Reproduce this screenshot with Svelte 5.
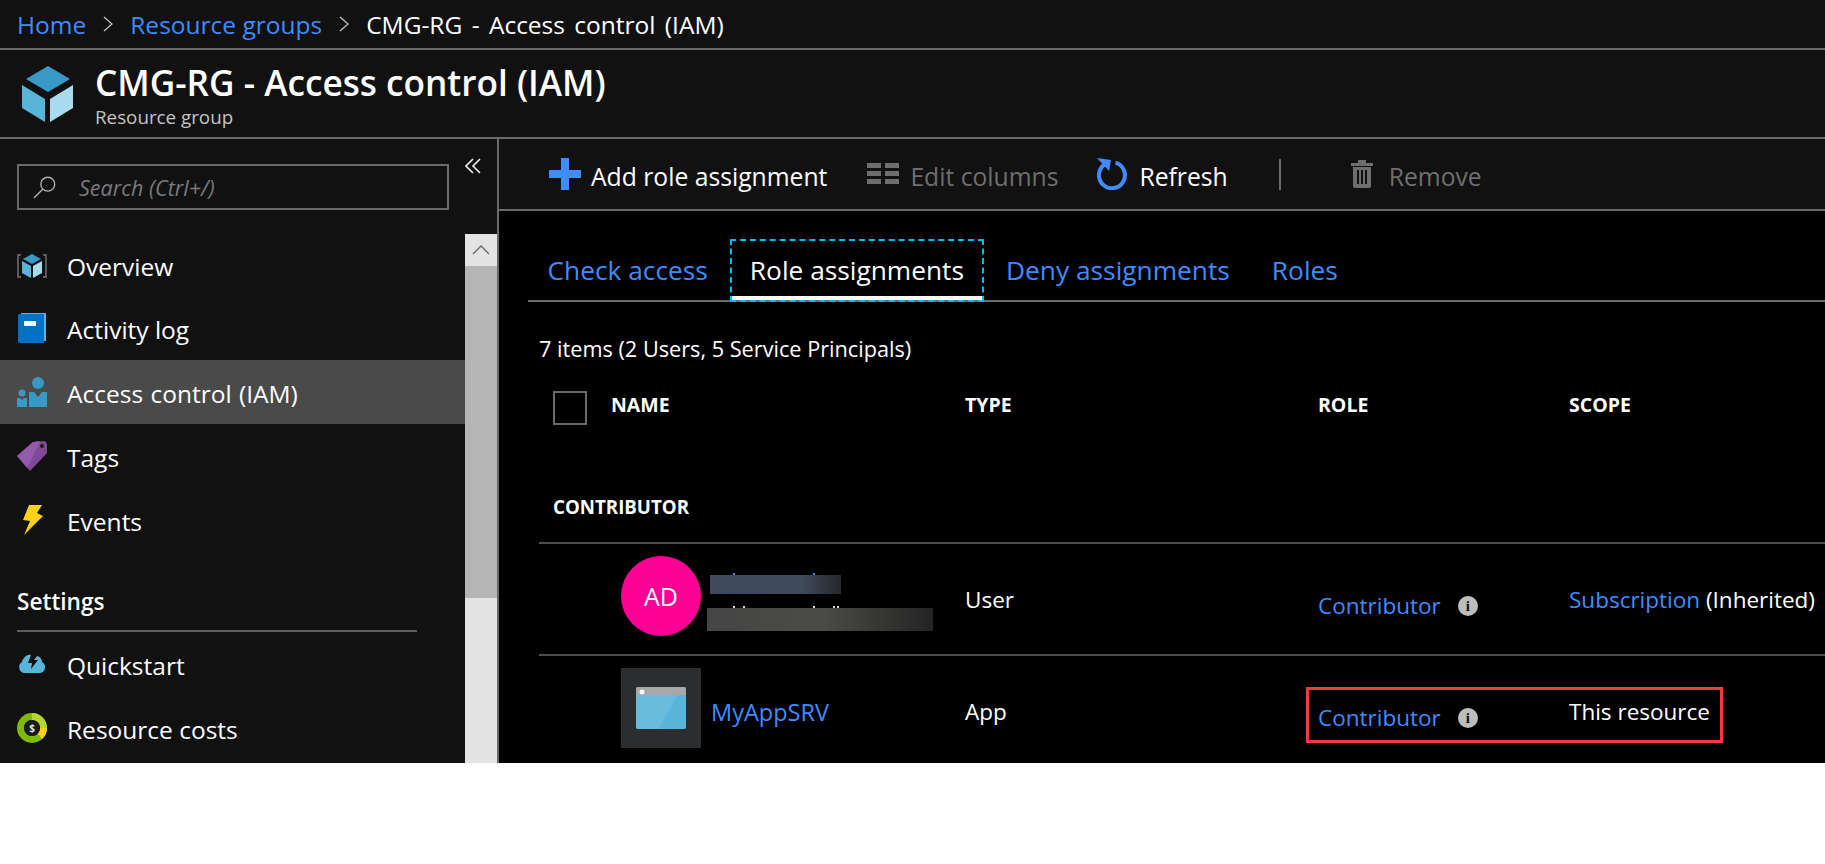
<script>
  const nav = ['Overview', 'Activity log', 'Access control (IAM)', 'Tags', 'Events'];
</script>

<div class="page">
  <nav class="crumbs">
    <a href="#home">Home</a>
    <svg class="chev" viewBox="0 0 10 16"><path d="M1 1l8 7-8 7" /></svg>
    <a href="#rg">Resource groups</a>
    <svg class="chev" viewBox="0 0 10 16"><path d="M1 1l8 7-8 7" /></svg>
    <span class="here">CMG-RG - Access control (IAM)</span>
  </nav>

  <header class="head">
    <svg class="cube" viewBox="0 0 51 56">
      <polygon points="26,0 48,13 26,26 4,13" fill="#3999c6" />
      <polygon points="0,19 23,33 23,56 0,42" fill="#59b4d9" />
      <polygon points="28,33 51,19 51,42 28,56" fill="#a9dbef" />
    </svg>
    <div class="titles">
      <h1>CMG-RG - Access control (IAM)</h1>
      <p>Resource group</p>
    </div>
  </header>

  <div class="body">
    <aside class="side">
      <div class="side-top">
        <div class="search">
          <svg viewBox="0 0 26 26" class="glass"><circle cx="16" cy="10" r="7.5" /><path d="M10.5 15.5L1 25" /></svg>
          <span>Search (Ctrl+/)</span>
        </div>
        <svg class="collapse" viewBox="0 0 16 16"><path d="M8 1L1 8l7 7M15 1L8 8l7 7" /></svg>
      </div>
      <div class="side-main">
        <div class="menu">
          {#each nav as item, i}
            <div class="item" class:sel={i === 2}>
              <span class="ico">
                {#if i === 0}
                  <svg viewBox="0 0 30 24" width="30" height="24">
                    <path d="M4 1H1v22h3M26 1h3v22h-3" fill="none" stroke="#777" stroke-width="1.4" />
                    <polygon points="15,0 24,5 15,10 6,5" fill="#3999c6" />
                    <polygon points="5,7 14,12 14,24 5,19" fill="#59b4d9" />
                    <polygon points="16,12 25,7 25,19 16,24" fill="#a9dbef" />
                  </svg>
                {:else if i === 1}
                  <svg viewBox="0 0 28 30" width="28" height="30">
                    <path d="M3 0h25v28h-2V2H3z" fill="#59b4d9" />
                    <path d="M2 1h24v29H2a2 2 0 0 1-2-2V3a2 2 0 0 1 2-2z" fill="#0072c6" />
                    <rect x="6" y="8" width="12" height="5" rx="1" fill="#fff" />
                  </svg>
                {:else if i === 2}
                  <svg viewBox="0 0 30 30" width="30" height="30">
                    <circle cx="21" cy="6" r="6" fill="#3999c6" />
                    <path d="M12 15h5l4 5 4-5h5v15H12z" fill="#3999c6" />
                    <circle cx="5" cy="16" r="3.5" fill="#3999c6" />
                    <path d="M0 21h3l2 2 2-2h3v9H0z" fill="#3999c6" />
                  </svg>
                {:else if i === 3}
                  <svg viewBox="0 0 30 30" width="30" height="30">
                    <path d="M0 15L16 1l12-1 2 3v9L13 30z" fill="#804998" />
                    <path d="M0 15L16 1l6-1 1 1-13 26z" fill="#9c62b4" opacity=".7" />
                    <circle cx="25" cy="5" r="2" fill="#1a1a1a" />
                  </svg>
                {:else}
                  <svg viewBox="0 0 30 30" width="30" height="30">
                    <polygon points="12,0 25,0 20,8 26,11 7,30 13,16 6,15" fill="#fcd116" />
                  </svg>
                {/if}
              </span>
              <span class="label">{item}</span>
            </div>
          {/each}

          <div class="group">Settings</div>

          <div class="item first">
            <span class="ico">
              <svg viewBox="0 0 30 20" width="30" height="20">
                <path d="M7 19a6 6 0 0 1-2-11c1-4 5-8 9-7l-3 8 4 0-1 6 7-9h-4l3-4c4 1 5 4 5 6a5.500 5.500 0 0 1 3 5c0 3-2 6-5 6z" fill="#59b4d9" />
              </svg>
            </span>
            <span class="label">Quickstart</span>
          </div>
          <div class="item">
            <span class="ico">
              <svg viewBox="0 0 30 30" width="30" height="30">
                <circle cx="15" cy="15" r="11.500" fill="none" stroke="#7fba00" stroke-width="7" />
                <path d="M15 3.500A11.500 11.500 0 0 1 26.500 15" fill="none" stroke="#b8d432" stroke-width="7" />
                <path d="M26.500 15A11.500 11.500 0 0 1 23 23.200" fill="none" stroke="#fcd116" stroke-width="7" />
                <circle cx="15" cy="15" r="8" fill="#1a1a1a" />
                <text x="15" y="19" class="dollar">$</text>
              </svg>
            </span>
            <span class="label">Resource costs</span>
          </div>
        </div>
        <div class="scroll">
          <div class="up"><svg viewBox="0 0 18 10" width="18" height="10"><path d="M1 9l8-8 8 8" /></svg></div>
          <div class="thumb"></div>
        </div>
      </div>
    </aside>

    <main class="main">
      <div class="bar">
        <div class="act add">
          <svg viewBox="0 0 32 32" width="32" height="32"><path d="M12 0h8v12h12v8H20v12h-8V20H0v-8h12z" fill="#3f8cff" /></svg>
          <span class="label">Add role assignment</span>
        </div>
        <div class="act off edit">
          <svg viewBox="0 0 32 22" width="32" height="22" fill="#6e6e6e">
            <rect width="14" height="5" /><rect x="18" width="14" height="5" />
            <rect y="8" width="14" height="5" /><rect x="18" y="8" width="14" height="5" />
            <rect y="16" width="14" height="5" /><rect x="18" y="16" width="14" height="5" />
          </svg>
          <span class="label">Edit columns</span>
        </div>
        <div class="act refresh">
          <svg viewBox="0 0 32 32" width="32" height="32">
            <path d="M9 6.200a13 13 0 1 0 10.500-1.500" fill="none" stroke="#3f8cff" stroke-width="4" />
            <polygon points="1,0 15,2 13,13" fill="#3f8cff" />
          </svg>
          <span class="label">Refresh</span>
        </div>
        <div class="sep"></div>
        <div class="act off remove">
          <svg viewBox="0 0 22 28" width="22" height="28" fill="#6e6e6e">
            <rect y="3" width="22" height="3" /><rect x="7" width="8" height="3" />
            <path d="M2 7h18v19a2 2 0 0 1-2 2H4a2 2 0 0 1-2-2zM6 10v14h2V10zm4 0v14h2V10zm4 0v14h2V10z" fill-rule="evenodd" />
          </svg>
          <span class="label">Remove</span>
        </div>
      </div>

      <div class="tabs">
        <span class="tab">Check access</span>
        <span class="tab on">Role assignments</span>
        <span class="tab">Deny assignments</span>
        <span class="tab">Roles</span>
      </div>

      <p class="count">7 items (2 Users, 5 Service Principals)</p>

      <div class="tbl">
        <div class="row thead">
          <div class="name-h"><span class="check"></span><b>NAME</b></div>
          <b>TYPE</b>
          <b>ROLE</b>
          <b>SCOPE</b>
        </div>
        <div class="grp"><b>CONTRIBUTOR</b></div>

        <div class="row data">
          <div class="name">
            <span class="avatar">AD</span>
            <div class="hidden-name">
              <span class="blur a"></span>
              <span class="blur b"></span>
            </div>
          </div>
          <div>User</div>
          <div class="role"><a href="#c">Contributor</a><span class="info">i</span></div>
          <div class="scope"><a href="#s">Subscription</a> (Inherited)</div>
        </div>

        <div class="row data">
          <div class="name">
            <span class="tile">
              <svg viewBox="0 0 50 42" width="50" height="42">
                <rect width="50" height="42" rx="2" fill="#59b4d9" />
                <path d="M0 8h42L22 42H2a2 2 0 0 1-2-2z" fill="#7cc4e2" opacity=".5" />
                <path d="M2 0h46a2 2 0 0 1 2 2v6H0V2a2 2 0 0 1 2-2z" fill="#a8a8a8" />
                <circle cx="6" cy="5" r="2.500" fill="#fff" />
              </svg>
            </span>
            <a href="#m">MyAppSRV</a>
          </div>
          <div>App</div>
          <div class="role"><a href="#c">Contributor</a><span class="info">i</span></div>
          <div class="scope">This resource</div>
          <span class="mark"></span>
        </div>
      </div>
    </main>
  </div>
</div>

<style>
  :global(body) {
    background: #fff;
  }
  .page {
    height: 763px;
    width: 1825px;
    overflow: hidden;
    display: flex;
    flex-direction: column;
    background: #000;
    color: #fff;
    font-family: 'Open Sans', 'Noto Sans', sans-serif;
    font-size: 24.5px;
  }
  a {
    color: #3f8cff;
    text-decoration: none;
  }
  .crumbs {
    height: 48px;
    flex: none;
    background: #111;
    border-bottom: 2px solid #6a6a6a;
    display: flex;
    align-items: center;
    padding-left: 17px;
  }
  .here {
    word-spacing: 3px;
  }
  .chev {
    width: 10px;
    height: 16px;
    margin: 0 17px;
    fill: none;
    stroke: #bbb;
    stroke-width: 1.4;
  }
  .head {
    height: 87px;
    flex: none;
    background: #111;
    border-bottom: 2px solid #6a6a6a;
    display: flex;
    align-items: center;
    gap: 22px;
    padding-left: 22px;
  }
  .cube {
    width: 51px;
    height: 56px;
  }
  .titles {
    padding-top: 4px;
  }
  h1 {
    margin: 0;
    font-size: 35.200px;
    font-weight: 600;
    line-height: 40px;
  }
  .head p {
    margin: 3px 0 0;
    font-size: 18.800px;
    line-height: 24px;
    color: #c4c4c4;
  }
  .body {
    flex: 1;
    min-height: 0;
    display: flex;
  }
  .side {
    width: 497px;
    flex: none;
    background: #111;
    display: flex;
    flex-direction: column;
  }
  .side-top {
    height: 92px;
    flex: none;
    display: flex;
    padding: 16px 0 0 17px;
    box-sizing: border-box;
  }
  .search {
    width: 432px;
    height: 46px;
    margin-top: 9px;
    box-sizing: border-box;
    border: 2px solid #6a6a6a;
    display: flex;
    align-items: center;
    gap: 22px;
    padding-left: 14px;
    color: #7a7a7a;
    font-style: italic;
    font-size: 21.500px;
  }
  .glass {
    width: 24px;
    height: 24px;
    fill: none;
    stroke: #b0b0b0;
    stroke-width: 1.5;
  }
  .collapse {
    width: 16px;
    height: 16px;
    margin: 3px 0 0 16px;
    fill: none;
    stroke: #eee;
    stroke-width: 1.6;
  }
  .side-main {
    flex: 1;
    display: flex;
    min-height: 0;
  }
  .menu {
    flex: 1;
  }
  .item {
    height: 64px;
    display: flex;
    align-items: center;
    padding-left: 17px;
  }
  .label {
    margin-top: 2px;
  }
  .item.sel {
    background: #4a4a4a;
    word-spacing: 1px;
  }
  .menu .item:first-child {
    margin-top: 4px;
    height: 61px;
  }
  .ico {
    width: 30px;
    height: 30px;
    margin-right: 20px;
    display: flex;
    align-items: center;
    justify-content: center;
    flex: none;
  }
  .group {
    font-weight: 600;
    margin: 33px 17px 0 17px;
    width: 400px;
    height: 45px;
    line-height: 34px;
    font-size: 22.600px;
    border-bottom: 2px solid #5e5e5e;
  }
  .dollar {
    font-size: 10px;
    font-weight: 700;
    fill: #ddd;
    text-anchor: middle;
  }
  .scroll {
    width: 32px;
    flex: none;
    margin-top: 3px;
    background: #e3e3e3;
  }
  .up {
    height: 32px;
    display: flex;
    align-items: center;
    justify-content: center;
  }
  .up path {
    fill: none;
    stroke: #666;
    stroke-width: 1.3;
  }
  .thumb {
    height: 332px;
    background: #b5b5b5;
  }
  .main {
    flex: 1;
    min-width: 0;
    border-left: 2px solid #6a6a6a;
  }
  .bar {
    height: 70px;
    background: #111;
    border-bottom: 2px solid #6a6a6a;
    display: flex;
    align-items: center;
    padding-left: 50px;
    font-size: 24.700px;
  }
  .bar .label {
    margin-top: 4px;
  }
  .act {
    display: flex;
    align-items: center;
    gap: 11px;
  }
  .add {
    gap: 10px;
  }
  .off {
    color: #6e6e6e;
  }
  .edit {
    margin-left: 40px;
  }
  .refresh {
    margin-left: 38px;
  }
  .sep {
    width: 2px;
    height: 31px;
    background: #6a6a6a;
    margin-left: 51px;
  }
  .remove {
    margin-left: 70px;
    gap: 16px;
  }
  .tabs {
    margin: 28px 0 0 29px;
    height: 61px;
    display: flex;
    gap: 3px;
    border-bottom: 2px solid #6a6a6a;
    font-size: 26.300px;
    color: #3f8cff;
  }
  .tab {
    padding: 0 17.500px;
    line-height: 58px;
    box-sizing: border-box;
    height: 63px;
    border: 2px solid transparent;
  }
  .tab.on {
    color: #fff;
    border: 2px dashed #00bcf2;
    box-shadow: inset 0 -4px 0 #fff;
  }
  .count {
    margin: 33px 0 0 40px;
    font-size: 21.700px;
    line-height: 28px;
  }
  .tbl {
    margin-left: 40px;
    font-size: 22.500px;
  }
  .row {
    display: grid;
    grid-template-columns: 426px 353px 251px 1fr;
    white-space: nowrap;
  }
  .thead {
    margin-top: 28px;
    height: 34px;
    align-items: center;
    font-size: 19.500px;
  }
  .thead b {
    margin-bottom: 7px;
    line-height: 27px;
  }
  .name-h {
    display: flex;
    align-items: center;
    padding-left: 14px;
    gap: 24px;
  }
  .check {
    width: 34px;
    height: 34px;
    box-sizing: border-box;
    border: 2px solid #6a6a6a;
  }
  .grp {
    margin-top: 69px;
    height: 48px;
    line-height: 26px;
    padding-left: 14px;
    font-size: 18.700px;
    border-bottom: 2px solid #4e4e4e;
  }
  .data {
    height: 110px;
    align-items: center;
    border-bottom: 2px solid #4e4e4e;
    position: relative;
  }
  .name {
    display: flex;
    align-items: center;
    padding: 0 0 6px 82px;
    gap: 10px;
  }
  .name a {
    margin-top: 8px;
    font-size: 23.500px;
  }
  .avatar {
    width: 80px;
    height: 80px;
    border-radius: 50%;
    background: #ff0097;
    display: flex;
    align-items: center;
    justify-content: center;
    font-size: 25px;
    flex: none;
  }
  .hidden-name {
    display: flex;
    flex-direction: column;
    gap: 14px;
    margin: 14px 0 0 -4px;
  }
  .blur {
    display: block;
    position: relative;
  }
  .blur::before {
    content: '';
    position: absolute;
    top: -2px;
    width: 2px;
    height: 2px;
  }
  .blur.a {
    width: 131px;
    height: 19px;
    margin-left: 3px;
    background: linear-gradient(90deg, #3d4a5c, #3f4a5a 70%, #25282c);
  }
  .blur.a::before {
    left: 23px;
    background: #3f8cff;
    box-shadow: 80px 0 0 #3f8cff;
  }
  .blur.b {
    width: 226px;
    height: 23px;
    background: linear-gradient(90deg, #454545, #4b4b48 50%, #242424);
  }
  .blur.b::before {
    left: 26px;
    background: #ddd;
    box-shadow: 10px 0 0 #ddd, 80px 0 0 #ddd, 100px 0 0 #ddd, 104px 0 0 #ddd;
  }
  .tile {
    width: 80px;
    height: 80px;
    background: #2b2d2e;
    display: flex;
    align-items: center;
    justify-content: center;
    flex: none;
  }
  .role {
    display: flex;
    align-items: center;
    gap: 17px;
    padding-top: 12px;
  }
  .info {
    width: 20px;
    height: 20px;
    margin-top: 2px;
    border-radius: 50%;
    background: #bdbdbd;
    color: #111;
    font: 700 15px/20px 'Liberation Serif', serif;
    text-align: center;
  }
  .mark {
    position: absolute;
    left: 767px;
    top: 31px;
    width: 417px;
    height: 56px;
    box-sizing: border-box;
    border: 3px solid #f7393f;
  }
</style>
